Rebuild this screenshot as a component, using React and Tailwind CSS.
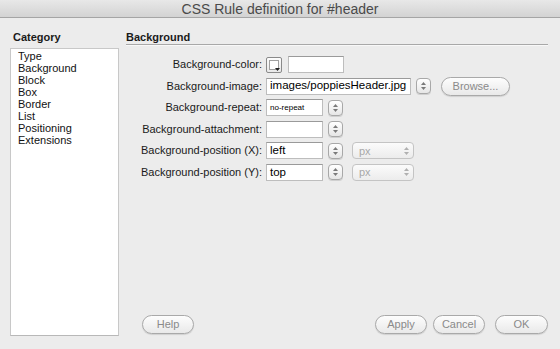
import React from "react";

const font = { fontFamily: '"Liberation Sans", Arial, sans-serif' };

function Spinner() {
  return (
    <div className="w-[15px] h-[16px] rounded-[4px] border border-[#a8a8a8] bg-gradient-to-b from-[#ffffff] to-[#e6e6e6] flex flex-col items-center justify-center gap-[2px] shadow-[0_1px_0_#d0d0d0]">
      <svg width="5" height="3" viewBox="0 0 5 3"><path d="M0 3 L2.5 0 L5 3Z" fill="#7a7a7a" /></svg>
      <svg width="5" height="3" viewBox="0 0 5 3"><path d="M0 0 L2.5 3 L5 0Z" fill="#7a7a7a" /></svg>
    </div>
  );
}

function Input({ w, children, small }) {
  return (
    <div
      className={`h-[17px] border border-[#bdbdbd] border-t-[#9a9a9a] bg-white flex items-center pl-[3px] text-[#000] whitespace-nowrap overflow-hidden ${small ? "text-[8px]" : "text-[11.5px]"}`}
      style={{ width: w }}
    >
      {children}
    </div>
  );
}

function PxSelect() {
  return (
    <div className="w-[62px] h-[17px] rounded-[4px] border border-[#c4c4c4] bg-gradient-to-b from-[#fbfbfb] to-[#ececec] flex items-center justify-between pl-[6px] pr-[4px] text-[11px] text-[#a8a8a8]">
      <span>px</span>
      <div className="flex flex-col items-center gap-[2px]">
        <svg width="5" height="3" viewBox="0 0 5 3"><path d="M0 3 L2.5 0 L5 3Z" fill="#b0b0b0" /></svg>
        <svg width="5" height="3" viewBox="0 0 5 3"><path d="M0 0 L2.5 3 L5 0Z" fill="#b0b0b0" /></svg>
      </div>
    </div>
  );
}

function Pill({ children, w }) {
  return (
    <div
      className="h-[19px] rounded-full border border-[#a9a9a9] bg-gradient-to-b from-[#fdfdfd] to-[#e9e9e9] flex items-center justify-center text-[11px] text-[#8a8a8a] shadow-[0_1px_1px_rgba(0,0,0,0.12)]"
      style={{ width: w }}
    >
      {children}
    </div>
  );
}

function Label({ children }) {
  return <div className="text-right text-[11px] text-[#1a1a1a] pr-[4px] leading-none whitespace-nowrap">{children}</div>;
}

export default function App() {
  return (
    <div className="w-[560px] h-[349px] bg-[#ececec] flex flex-col overflow-hidden" style={font}>
      <div className="h-[18px] bg-gradient-to-b from-[#e8e8e8] to-[#d3d3d3] border-b border-[#a5a5a5] flex items-center justify-center text-[14px] text-[#4a4a4a] leading-none">
        CSS Rule definition for #header
      </div>
      <div className="flex flex-1">
        <div className="w-[126px] pl-[10px] pt-[14px] pb-[13px] flex flex-col">
          <div className="text-[11px] font-bold text-[#1a1a1a] pl-[3px] leading-none h-[16px]">Category</div>
          <div className="w-[109px] flex-1 bg-white border border-[#c8c8c8] border-b-[#b8b8b8] pl-[7px] pt-[1px] text-[11px] text-[#111] leading-[12px]">
            <div>Type</div>
            <div>Background</div>
            <div>Block</div>
            <div>Box</div>
            <div>Border</div>
            <div>List</div>
            <div>Positioning</div>
            <div>Extensions</div>
          </div>
        </div>
        <div className="flex-1 pt-[14px] pr-[12px] flex flex-col">
          <div className="text-[11px] font-bold text-[#1a1a1a] leading-none h-[12px]">Background</div>
          <div className="h-[2px] border-t border-[#a8a8a8] border-b border-b-[#f8f8f8] mb-[10px]" />
          <div className="grid grid-cols-[140px_auto] items-center gap-y-[4.6px]">
            <Label>Background-color:</Label>
            <div className="flex items-center gap-[6px] h-[17px]">
              <div className="w-[16px] h-[16px] border border-[#8a8a8a] rounded-[2px] bg-gradient-to-b from-[#fdfdfd] to-[#e8e8e8] relative">
                <div className="absolute left-[2px] top-[2px] w-[10px] h-[10px] border border-[#a0a0a0] bg-white" />
                <svg className="absolute right-[1px] bottom-[1px]" width="5" height="3" viewBox="0 0 5 3"><path d="M0 0 L2.5 3 L5 0Z" fill="#222" /></svg>
              </div>
              <Input w={56}></Input>
            </div>

            <Label>Background-image:</Label>
            <div className="flex items-center h-[17px]">
              <Input w={145}>images/poppiesHeader.jpg</Input>
              <div className="ml-[5px]"><Spinner /></div>
              <div className="ml-[10px]"><Pill w={69}>Browse...</Pill></div>
            </div>

            <Label>Background-repeat:</Label>
            <div className="flex items-center h-[17px]">
              <Input w={57} small>no-repeat</Input>
              <div className="ml-[5px]"><Spinner /></div>
            </div>

            <Label>Background-attachment:</Label>
            <div className="flex items-center h-[17px]">
              <Input w={57}></Input>
              <div className="ml-[5px]"><Spinner /></div>
            </div>

            <Label>Background-position (X):</Label>
            <div className="flex items-center h-[17px]">
              <Input w={57}>left</Input>
              <div className="ml-[5px]"><Spinner /></div>
              <div className="ml-[9px]"><PxSelect /></div>
            </div>

            <Label>Background-position (Y):</Label>
            <div className="flex items-center h-[17px]">
              <Input w={57}>top</Input>
              <div className="ml-[5px]"><Spinner /></div>
              <div className="ml-[9px]"><PxSelect /></div>
            </div>
          </div>
          <div className="flex-1" />
          <div className="flex items-center pb-[15px] pl-[16px]">
            <Pill w={52}>Help</Pill>
            <div className="flex-1" />
            <Pill w={52}>Apply</Pill>
            <div className="ml-[6px]"><Pill w={52}>Cancel</Pill></div>
            <div className="ml-[10px]"><Pill w={53}>OK</Pill></div>
          </div>
        </div>
      </div>
    </div>
  );
}
